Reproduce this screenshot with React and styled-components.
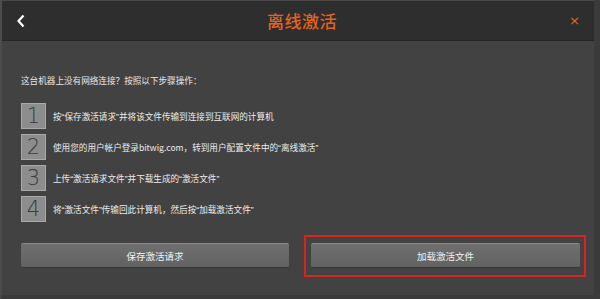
import React from "react";
import styled, { createGlobalStyle } from "styled-components";

const Global = createGlobalStyle`
  html, body { margin: 0; padding: 0; background: #3a3a3a; }
  body { font-family: "Noto Sans CJK SC", sans-serif; }
`;

const Window = styled.div`
  width: 600px;
  height: 299px;
  box-sizing: border-box;
  background: #424242;
  border-left: 2px solid #4c4c4c;
  border-right: 6px solid #3b3b3b;
  border-bottom: 4px solid #3b3b3b;
  display: flex;
  flex-direction: column;
  overflow: hidden;
`;

const Header = styled.div`
  height: 41px;
  flex: 0 0 41px;
  background: #2e2e2e;
  border-top: 1px solid #4a4a4a;
  border-bottom: 1px solid #242424;
  box-sizing: border-box;
  display: flex;
  align-items: center;
  justify-content: space-between;
  padding: 0 14px 0 14px;
`;

const Back = styled.div`
  width: 20px;
  display: flex;
  align-items: center;
`;

const Title = styled.div`
  color: #e4641f;
  font-size: 17px;
  font-weight: 500;
  letter-spacing: 0.5px;
  margin-left: 8px;
`;

const Close = styled.div`
  width: 20px;
  color: #e4641f;
  font-family: "DejaVu Sans", sans-serif;
  font-size: 13px;
  text-align: right;
`;

const Body = styled.div`
  flex: 1;
  display: flex;
  flex-direction: column;
  padding: 32px 11px 0 19px;
`;

const Intro = styled.div`
  color: #e6e6e6;
  font-size: 8.6px;
  line-height: 14px;
  margin-bottom: 16px;
`;

const Steps = styled.div`
  display: flex;
  flex-direction: column;
  gap: 5px;
  margin-bottom: 21px;
`;

const Step = styled.div`
  display: flex;
  align-items: center;
  gap: 7px;
`;

const Num = styled.div`
  width: 25px;
  height: 26px;
  box-sizing: border-box;
  background: #8d8d8d;
  border: 1px solid #a9a9a9;
  color: #3a3a3a;
  font-family: "DejaVu Sans", sans-serif;
  font-weight: 200;
  font-size: 21px;
  display: flex;
  align-items: center;
  justify-content: center;
`;

const StepText = styled.div`
  color: #ececec;
  font-size: 8.6px;
  white-space: nowrap;
`;

const Quote = styled.span`
  font-family: "Liberation Sans", sans-serif;
`;

const Buttons = styled.div`
  display: grid;
  grid-template-columns: 268px 269px;
  column-gap: 22px;
`;

const Slot = styled.div`
  position: relative;
  display: flex;
  &::after {
    content: "";
    display: ${(p) => (p.$highlight ? "block" : "none")};
    position: absolute;
    top: -8px;
    bottom: -9px;
    left: -7px;
    right: -6px;
    border: 2px solid #d8241e;
    pointer-events: none;
  }
`;

const Button = styled.div`
  flex: 1;
  height: 25px;
  box-sizing: border-box;
  border-radius: 2px;
  background: linear-gradient(#6f6f6f, #626262);
  border-top: 1px solid #8a8a8a;
  border-bottom: 1px solid #383838;
  color: #f2f2f2;
  font-size: 9.5px;
  display: flex;
  align-items: center;
  justify-content: center;
`;

const steps = [
  "按“保存激活请求”并将该文件传输到连接到互联网的计算机",
  "使用您的用户帐户登录bitwig.com，转到用户配置文件中的“离线激活”",
  "上传“激活请求文件”并下载生成的“激活文件”",
  "将“激活文件”传输回此计算机，然后按“加载激活文件”",
];

function renderText(s) {
  return s.split(/([“”])/).map((part, i) =>
    part === "“" || part === "”" ? <Quote key={i}>{part}</Quote> : part
  );
}

export default function App() {
  return (
    <>
      <Global />
      <Window>
        <Header>
          <Back>
            <svg width="10" height="14" viewBox="0 0 10 14">
              <path d="M7.5 1.5 L2.5 7 L7.5 12.5" fill="none" stroke="#ffffff" strokeWidth="2.2" />
            </svg>
          </Back>
          <Title>离线激活</Title>
          <Close>×</Close>
        </Header>
        <Body>
          <Intro>这台机器上没有网络连接？按照以下步骤操作：</Intro>
          <Steps>
            {steps.map((s, i) => (
              <Step key={i}>
                <Num>{i + 1}</Num>
                <StepText>{renderText(s)}</StepText>
              </Step>
            ))}
          </Steps>
          <Buttons>
            <Slot>
              <Button>保存激活请求</Button>
            </Slot>
            <Slot $highlight>
              <Button>加载激活文件</Button>
            </Slot>
          </Buttons>
        </Body>
      </Window>
    </>
  );
}
